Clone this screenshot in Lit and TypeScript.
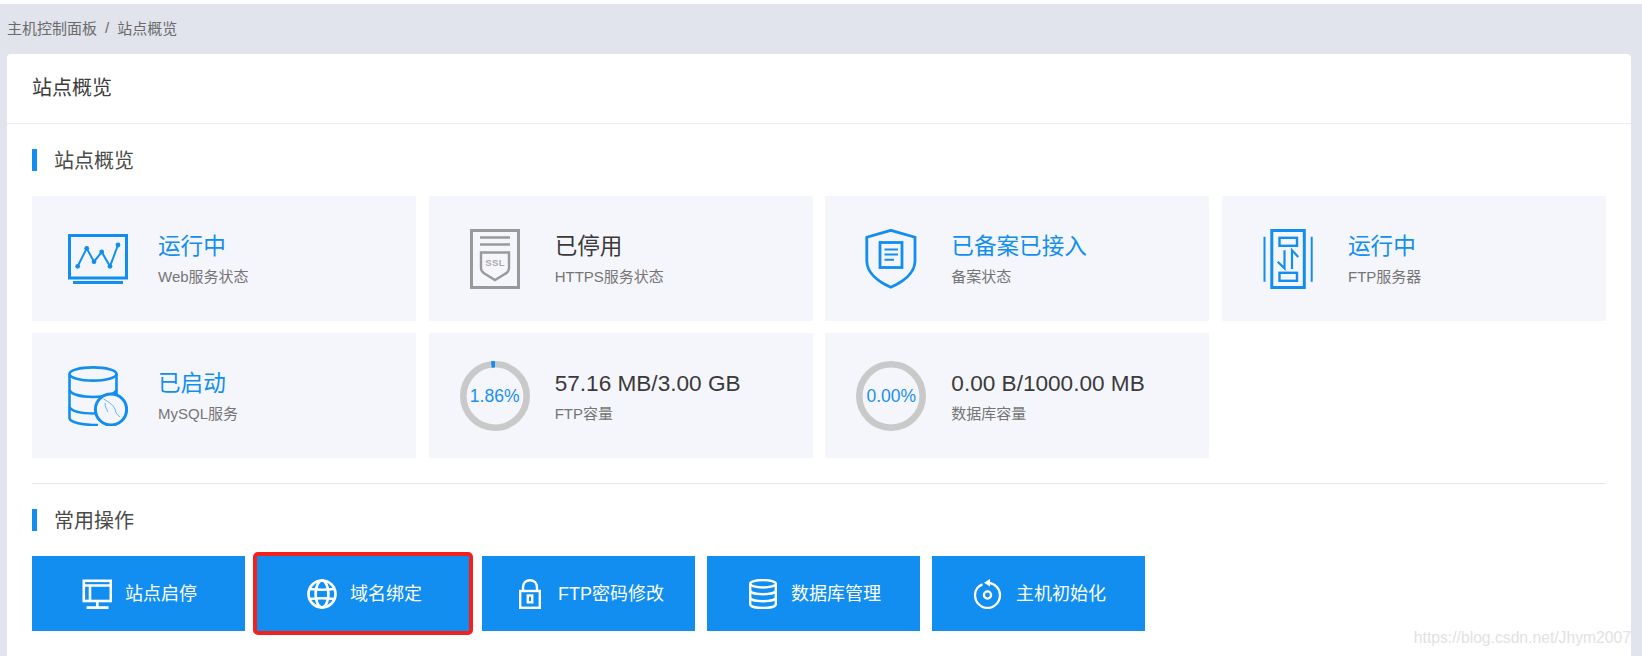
import { LitElement, html, css, svg } from "lit";
import { customElement } from "lit/decorators.js";

const monitorIcon = svg`<g fill="none" stroke="currentColor">
  <rect x="1.500" y="6.500" width="57" height="42.500" stroke-width="3"/>
  <path d="M5 53.500H55" stroke-width="3"/>
  <path d="M9.700 37.300L18.700 19.300L26 32.700L33.700 23L42 37.300L50 16" stroke-width="2"/></g>
  <g fill="currentColor"><circle cx="9.700" cy="37.300" r="2.400"/><circle cx="18.700" cy="19.300" r="2.400"/><circle cx="26" cy="32.700" r="2.400"/><circle cx="33.700" cy="23" r="2.400"/><circle cx="42" cy="37.300" r="2.400"/><circle cx="50" cy="16" r="2.400"/></g>`;

const sslIcon = svg`<g fill="none" stroke="#999">
  <rect x="6.500" y="1.500" width="47" height="57" stroke-width="3"/>
  <path d="M15 8.500H45M15 15.500H45" stroke-width="2.400"/>
  <path d="M16 23.500H44V39Q44 43 39 45.500L30 51L21 45.500Q16 43 16 39Z" stroke-width="2.400"/></g>
  <text x="30" y="37" text-anchor="middle" font-family="Liberation Sans" font-weight="700" font-size="9.500" letter-spacing=".4" fill="#aaa">SSL</text>`;

const shieldIcon = svg`<g fill="none" stroke="currentColor">
  <path d="M29.800 1.300L5.800 8.200V32C5.800 44 18 53 29.800 58.200C41.600 53 54 44 54 32V8.200Z" stroke-width="2.800"/>
  <rect x="19" y="13.500" width="22" height="25" stroke-width="2.800"/>
  <path d="M23.500 20.500H37M23.500 25.500H37M23.500 30.800H33" stroke-width="2"/></g>`;

const ftpIcon = svg`<g fill="none" stroke="currentColor">
  <path d="M6.500 7.700V52.700M53.700 7.700V52.700" stroke-width="2"/>
  <rect x="13.800" y="1.500" width="32.500" height="57" stroke-width="3"/>
  <rect x="21.500" y="8.800" width="17.500" height="8" stroke-width="2.400"/>
  <rect x="21.500" y="43.800" width="17.500" height="8" stroke-width="2.400"/>
  <path d="M26.500 21.300V39.300L19.700 32.700M34 40V21.300L40.300 28" stroke-width="2.200"/></g>`;

const mysqlIcon = svg`<g fill="none" stroke="currentColor" stroke-width="2.600">
  <ellipse cx="25" cy="8" rx="23.500" ry="6.600"/>
  <path d="M1.500 8V52C1.500 56.500 15 59 30 59M48.500 8V30"/>
  <path d="M1.500 24C4 29 15 31 25 31C35 31 46 29 48.500 24M1.500 41C4 46 15 47.500 27 47.500"/>
  <circle cx="43" cy="43.500" r="15.600" fill="#f5f6fb" stroke-width="3"/>
  <path d="M35.500 33C41 36 47 40 47.500 45C48 48 50 49 52 51M37 37C37 41 39 44 40 46" stroke-width=".9" opacity=".7"/></g>`;

const screenIcon = svg`<g fill="none" stroke="currentColor" stroke-width="2.600">
  <rect x="1.800" y="1.800" width="27" height="20.200"/>
  <path d="M1.800 6.500H28.800M8 6.500V22M15.300 22V28M4.500 28.600H26.500"/></g>`;

const globeIcon = svg`<g fill="none" stroke="currentColor" stroke-width="2.700">
  <circle cx="15" cy="15" r="13.500"/><ellipse cx="15" cy="15" rx="6.400" ry="13.500"/>
  <path d="M3 10Q15 11.500 27 10M3 20Q15 18.500 27 20"/></g>`;

const lockIcon = svg`<g fill="none" stroke="currentColor" stroke-width="2.400">
  <rect x="5.200" y="12" width="19.600" height="16.800"/>
  <path d="M8 12V8.500C8 4 11 1.200 15 1.200C19 1.200 22 4 22 8.500V12"/>
  <rect x="12.800" y="16.500" width="4.400" height="6.800"/></g>`;

const dbIcon = svg`<g fill="none" stroke="currentColor" stroke-width="2.400">
  <ellipse cx="15" cy="4.800" rx="12.800" ry="3.700"/>
  <path d="M2.200 4.800V25.200C2.200 27.500 8 29 15 29C22 29 27.800 27.500 27.800 25.200V4.800"/>
  <path d="M2.200 11.500C2.200 13.800 8 15.200 15 15.200C22 15.200 27.800 13.800 27.800 11.500M2.200 18.500C2.200 20.800 8 22.200 15 22.200C22 22.200 27.800 20.800 27.800 18.500"/></g>`;

const resetIcon = svg`<g fill="none" stroke="currentColor" stroke-width="2.300">
  <path d="M9.500 5.300C5 6.800 2 11.300 2 16C2 23.400 7.800 29 14.500 29C21.200 29 27 23.400 27 16C27 10 22.300 4.600 16 3.800"/>
  <circle cx="14.500" cy="16" r="3.600"/></g>
  <path d="M17 0V7.600L11 3.800Z" fill="currentColor"/>`;

interface Item { title: string; sub: string; tone: "blue" | "dark"; icon?: unknown; ring?: { label: string; pct: number }; }

const items: Item[] = [
  { title: "运行中", sub: "Web服务状态", tone: "blue", icon: monitorIcon },
  { title: "已停用", sub: "HTTPS服务状态", tone: "dark", icon: sslIcon },
  { title: "已备案已接入", sub: "备案状态", tone: "blue", icon: shieldIcon },
  { title: "运行中", sub: "FTP服务器", tone: "blue", icon: ftpIcon },
  { title: "已启动", sub: "MySQL服务", tone: "blue", icon: mysqlIcon },
  { title: "57.16 MB/3.00 GB", sub: "FTP容量", tone: "dark", ring: { label: "1.86%", pct: 1.86 } },
  { title: "0.00 B/1000.00 MB", sub: "数据库容量", tone: "dark", ring: { label: "0.00%", pct: 0 } },
];

const actions = [
  { label: "站点启停", icon: screenIcon },
  { label: "域名绑定", icon: globeIcon, marked: true },
  { label: "FTP密码修改", icon: lockIcon },
  { label: "数据库管理", icon: dbIcon },
  { label: "主机初始化", icon: resetIcon },
];

@customElement("app-root")
export class AppRoot extends LitElement {
  static styles = css`
    :host {
      display: block;
      position: relative;
      height: 656px;
      overflow: hidden;
      box-sizing: border-box;
      border-top: 4px solid #fdfdfe;
      background: #e1e4ec;
      font-family: "Liberation Sans", "Noto Sans CJK SC", sans-serif;
      color: #333;
    }
    .crumb {
      box-sizing: border-box;
      height: 50px;
      padding: 0 0 4px 7px;
      display: flex;
      align-items: center;
      gap: 8px;
      font-size: 15px;
      color: #6a6a6a;
    }
    .panel {
      margin: 0 11px 0 7px;
      background: #fff;
      border-radius: 4px 4px 0 0;
    }
    .panel-head {
      box-sizing: border-box;
      height: 70px;
      border-bottom: 1px solid #e9ebf0;
      padding: 0 0 4px 25px;
      display: flex;
      align-items: center;
      font-size: 20px;
      color: #3c3c3c;
    }
    .panel-body {
      padding: 25px;
      display: flex;
      flex-direction: column;
      gap: 25px;
    }
    .section-title {
      box-sizing: border-box;
      height: 22px;
      border-left: 5px solid #118ef0;
      padding: 0 0 2px 17px;
      display: flex;
      align-items: center;
      font-size: 20px;
      color: #4a4a4a;
    }
    .grid {
      display: grid;
      grid-template-columns: repeat(4, 1fr);
      grid-auto-rows: 125px;
      gap: 12px 12.670px;
    }
    .tile {
      background: #f5f6fb;
      display: flex;
      align-items: center;
      padding-left: 21px;
    }
    .slot {
      width: 90px;
      height: 70px;
      margin-right: 15px;
      display: flex;
      align-items: center;
      justify-content: center;
      flex: none;
    }
    .slot svg { display: block; }
    .tile.blue .slot { color: #118ef0; }
    .ring { position: relative; width: 70px; height: 70px; }
    .ring span {
      position: absolute;
      inset: 0;
      padding-top: 2px;
      display: flex;
      align-items: center;
      justify-content: center;
      font-size: 17.500px;
      color: #1890f0;
    }
    .text { display: flex; flex-direction: column; gap: 5px; padding-top: 2px; }
    .title { font-size: 22.600px; line-height: 30px; color: #3a3a3a; white-space: nowrap; }
    .tile.blue .title { color: #118ef0; }
    .sub { font-size: 15px; line-height: 20px; color: #757575; white-space: nowrap; }
    .divider { height: 1px; background: #e4e6eb; }
    .actions { display: flex; gap: 12px; }
    .action {
      position: relative;
      box-sizing: border-box;
      width: 213px;
      height: 75px;
      padding-left: 2px;
      background: #118ef0;
      color: #fff;
      display: flex;
      align-items: center;
      justify-content: center;
      gap: 13px;
      font-size: 18px;
      white-space: nowrap;
    }
    .action svg { display: block; flex: none; }
    .action span { padding-bottom: 4px; }
    .action.marked::after {
      content: "";
      position: absolute;
      inset: -4px -3px -4px -4px;
      border: 4px solid #f3201b;
      border-radius: 5px;
    }
    .watermark {
      position: absolute;
      right: 11px;
      bottom: 9px;
      font-size: 15.700px;
      line-height: 18px;
      color: #e2e2e2;
    }
  `;

  private renderVisual(it: Item) {
    if (it.ring) {
      const r = 31.7;
      const c = 2 * Math.PI * r;
      const arc = (it.ring.pct / 100) * c;
      return html`<div class="ring">
        <svg width="70" height="70" viewBox="0 0 70 70">
          <circle cx="35" cy="35" r="${r}" fill="none" stroke="#c9c9c9" stroke-width="6.600"/>
          ${arc > 0
            ? svg`<circle cx="35" cy="35" r="${r}" fill="none" stroke="#118ef0" stroke-width="6.600"
                stroke-dasharray="${arc} ${c}" transform="rotate(-90 35 35) scale(1 -1) translate(0 -70)"/>`
            : svg`<path d="M35 0V6.600M35 63.400V70" stroke="#c3d0da" stroke-width="1"/>`}
        </svg>
        <span>${it.ring.label}</span>
      </div>`;
    }
    return html`<svg width="60" height="60" viewBox="0 0 60 60">${it.icon}</svg>`;
  }

  render() {
    return html`
      <div class="crumb"><span>主机控制面板</span><span>/</span><span>站点概览</span></div>
      <div class="panel">
        <div class="panel-head">站点概览</div>
        <div class="panel-body">
          <div class="section-title">站点概览</div>
          <div class="grid">
            ${items.map(
              (it) => html`<div class="tile ${it.tone}">
                <div class="slot">${this.renderVisual(it)}</div>
                <div class="text">
                  <div class="title">${it.title}</div>
                  <div class="sub">${it.sub}</div>
                </div>
              </div>`
            )}
          </div>
          <div class="divider"></div>
          <div class="section-title">常用操作</div>
          <div class="actions">
            ${actions.map(
              (a) => html`<div class="action ${a.marked ? "marked" : ""}">
                <svg width="30" height="30" viewBox="0 0 30 30">${a.icon}</svg>
                <span>${a.label}</span>
              </div>`
            )}
          </div>
        </div>
      </div>
      <div class="watermark">https://blog.csdn.net/Jhym2007</div>
    `;
  }
}
